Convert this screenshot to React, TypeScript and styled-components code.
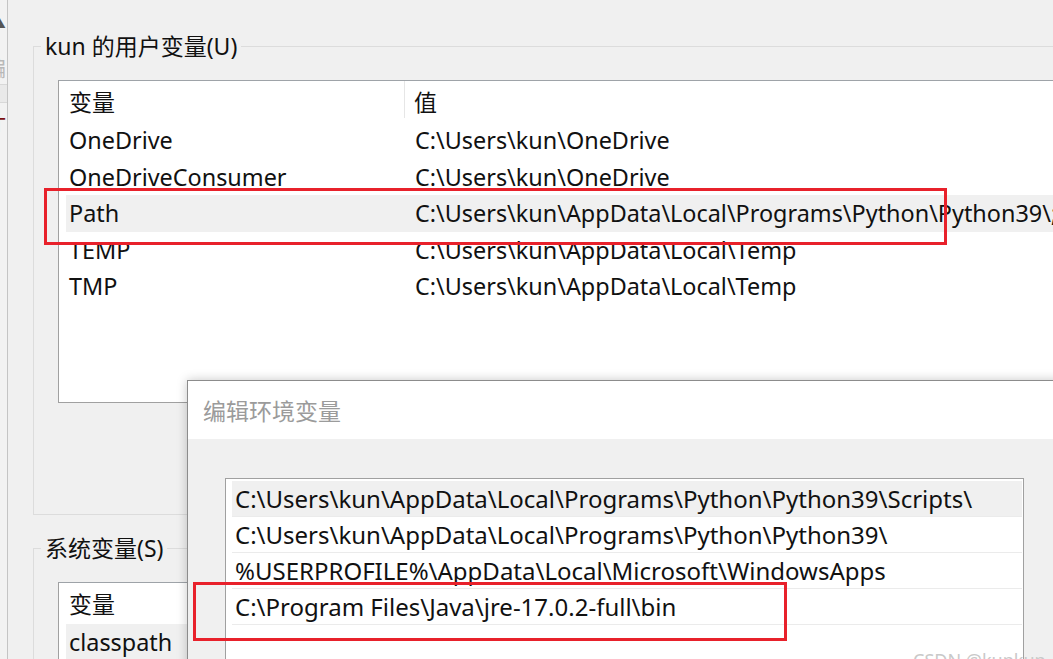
import * as React from 'react';
import styled, { createGlobalStyle } from 'styled-components';

const GlobalStyle = createGlobalStyle`
    * { box-sizing: border-box; }
    body {
        margin: 0;
        background: #f0f0f0;
        font-family: "Noto Sans", "Noto Sans CJK SC", sans-serif;
    }
`;

interface RowProps {
    selected?: boolean;
}

const userVars = [
    { name: 'OneDrive', value: 'C:\\Users\\kun\\OneDrive' },
    { name: 'OneDriveConsumer', value: 'C:\\Users\\kun\\OneDrive' },
    { name: 'Path', value: 'C:\\Users\\kun\\AppData\\Local\\Programs\\Python\\Python39\\;C:\\Users\\kun\\AppData\\Local\\Microsoft\\WindowsApps;', selected: true },
    { name: 'TEMP', value: 'C:\\Users\\kun\\AppData\\Local\\Temp' },
    { name: 'TMP', value: 'C:\\Users\\kun\\AppData\\Local\\Temp' },
];

const pathEntries = [
    'C:\\Users\\kun\\AppData\\Local\\Programs\\Python\\Python39\\Scripts\\',
    'C:\\Users\\kun\\AppData\\Local\\Programs\\Python\\Python39\\',
    '%USERPROFILE%\\AppData\\Local\\Microsoft\\WindowsApps',
    'C:\\Program Files\\Java\\jre-17.0.2-full\\bin',
    '',
];

export default function App() {
    return (
        <>
            <GlobalStyle />
            <Screen>
                <BehindStrip>
                    <StripGlyph>▲</StripGlyph>
                    <StripGlyph faded>编</StripGlyph>
                    <StripLine />
                    <StripGlyph red>计</StripGlyph>
                </BehindStrip>

                <MainWindow>
                    <Group>
                        <GroupTitle>kun 的用户变量(U)</GroupTitle>
                        <ListView tall>
                            <HeaderRow>
                                <HeaderName>变量</HeaderName>
                                <HeaderValue>值</HeaderValue>
                            </HeaderRow>
                            {userVars.map(v => (
                                <Row key={v.name} selected={v.selected}>
                                    <NameCell>{v.name}</NameCell>
                                    <ValueCell>{v.value}</ValueCell>
                                </Row>
                            ))}
                        </ListView>
                    </Group>

                    <Group second>
                        <GroupTitle>系统变量(S)</GroupTitle>
                        <ListView>
                            <HeaderRow>
                                <HeaderName>变量</HeaderName>
                            </HeaderRow>
                            <Row selected>
                                <NameCell>classpath</NameCell>
                            </Row>
                        </ListView>
                    </Group>
                </MainWindow>

                <EditDialog>
                    <TitleBar>编辑环境变量</TitleBar>
                    <DialogBody>
                        <EntryList>
                            {pathEntries.map((p, i) => (
                                <EntryRow key={i} selected={i === 0}>{p}</EntryRow>
                            ))}
                        </EntryList>
                    </DialogBody>
                </EditDialog>

                <Mark style={{ left: 44, top: 188, width: 903, height: 57 }} />
                <Mark style={{ left: 193, top: 582, width: 594, height: 59 }} />
                <Watermark>CSDN @kunkun</Watermark>
            </Screen>
        </>
    );
}

const Screen = styled.div`
    position: relative;
    width: 1053px;
    height: 659px;
    overflow: hidden;
    display: flex;
    background: #f0f0f0;
    color: #111;
    font-size: 23px;
`;

// edge of the window lying underneath
const BehindStrip = styled.div`
    width: 8px;
    flex-shrink: 0;
    overflow: hidden;
    border-right: 1px solid #c4c4c4;
    background: #f2f2f2;
    display: flex;
    flex-direction: column;
    padding-top: 2px;
`;

const StripGlyph = styled.div<{ faded?: boolean; red?: boolean }>`
    margin-left: -16px;
    font-size: 22px;
    line-height: 34px;
    margin-top: ${p => (p.faded ? '14px' : '0')};
    color: ${p => (p.red ? '#7a1010' : p.faded ? '#b8b8b8' : '#555')};
`;

const StripLine = styled.div`
    height: 19px;
    border-top: 1px solid #d8d8d8;
    border-bottom: 1px solid #d8d8d8;
    background: #e9e9e9;
    margin-top: 0;
`;

const MainWindow = styled.div`
    flex: 1;
    padding-left: 25px;
    display: flex;
    flex-direction: column;
`;

const Group = styled.div<{ second?: boolean }>`
    margin-top: ${p => (p.second ? '33px' : '46px')};
    width: 1100px;
    flex-shrink: 0;
    border: 1px solid #dcdcdc;
    padding: 0 0 ${p => (p.second ? '0' : '111px')} 24px;
`;

const GroupTitle = styled.div`
    width: fit-content;
    margin: -15px 0 0 -17px;
    padding: 0 4px;
    background: #f0f0f0;
    line-height: 28px;
    white-space: nowrap;
`;

const ListView = styled.div<{ tall?: boolean }>`
    margin-top: 20px;
    height: ${p => (p.tall ? '323px' : '200px')};
    background: #fff;
    border: 1px solid #a0a0a0;
    border-top-color: #9ea3a8;
    padding-left: 7px;
    overflow: hidden;
    font-size: 23.4px;
`;

const HeaderRow = styled.div`
    display: flex;
    height: 41px;
    align-items: stretch;
    font-size: 23px;
`;

const HeaderName = styled.div`
    width: 339px;
    padding: 6px 0 0 3px;
    border-right: 1px solid #e6e6e6;
    margin-bottom: 4px;
    line-height: 30px;
`;

const HeaderValue = styled.div`
    padding: 6px 0 0 9px;
    line-height: 30px;
`;

const Row = styled.div<RowProps>`
    display: flex;
    align-items: center;
    height: 36.5px;
    white-space: nowrap;
    background: ${p => (p.selected ? '#f0f0f0' : 'transparent')};
`;

const NameCell = styled.div`
    width: 346px;
    flex-shrink: 0;
    padding-left: 3px;
`;

const ValueCell = styled.div`
    padding-left: 3px;
`;

const EditDialog = styled.div`
    position: absolute;
    left: 187px;
    top: 380px;
    width: 1000px;
    height: 420px;
    border: 1px solid #8c8c8c;
    box-shadow: 0 0 10px rgba(0, 0, 0, 0.22);
    background: #f0f0f0;
    display: flex;
    flex-direction: column;
`;

const TitleBar = styled.div`
    height: 58px;
    background: #fff;
    padding-left: 15px;
    display: flex;
    align-items: center;
    color: #9b9b9b;
    flex-shrink: 0;
`;

const DialogBody = styled.div`
    padding: 39px 0 0 37px;
`;

const EntryList = styled.div`
    width: 799px;
    height: 300px;
    background: #fff;
    border: 1px solid #a0a0a0;
    padding: 2px 1px 0 6px;
    font-size: 24px;
`;

const EntryRow = styled.div<RowProps>`
    height: 36px;
    padding-left: 3px;
    display: flex;
    align-items: center;
    white-space: nowrap;
    border-bottom: 1px solid #ebebeb;
    background: ${p => (p.selected ? '#f0f0f0' : '#fff')};
`;

// annotation frames drawn over the screenshot
const Mark = styled.div`
    position: absolute;
    border: 3px solid #e8212b;
    pointer-events: none;
`;

const Watermark = styled.div`
    position: absolute;
    left: 913px;
    top: 648px;
    font-size: 18px;
    color: #c9c9c9;
    white-space: nowrap;
`;
